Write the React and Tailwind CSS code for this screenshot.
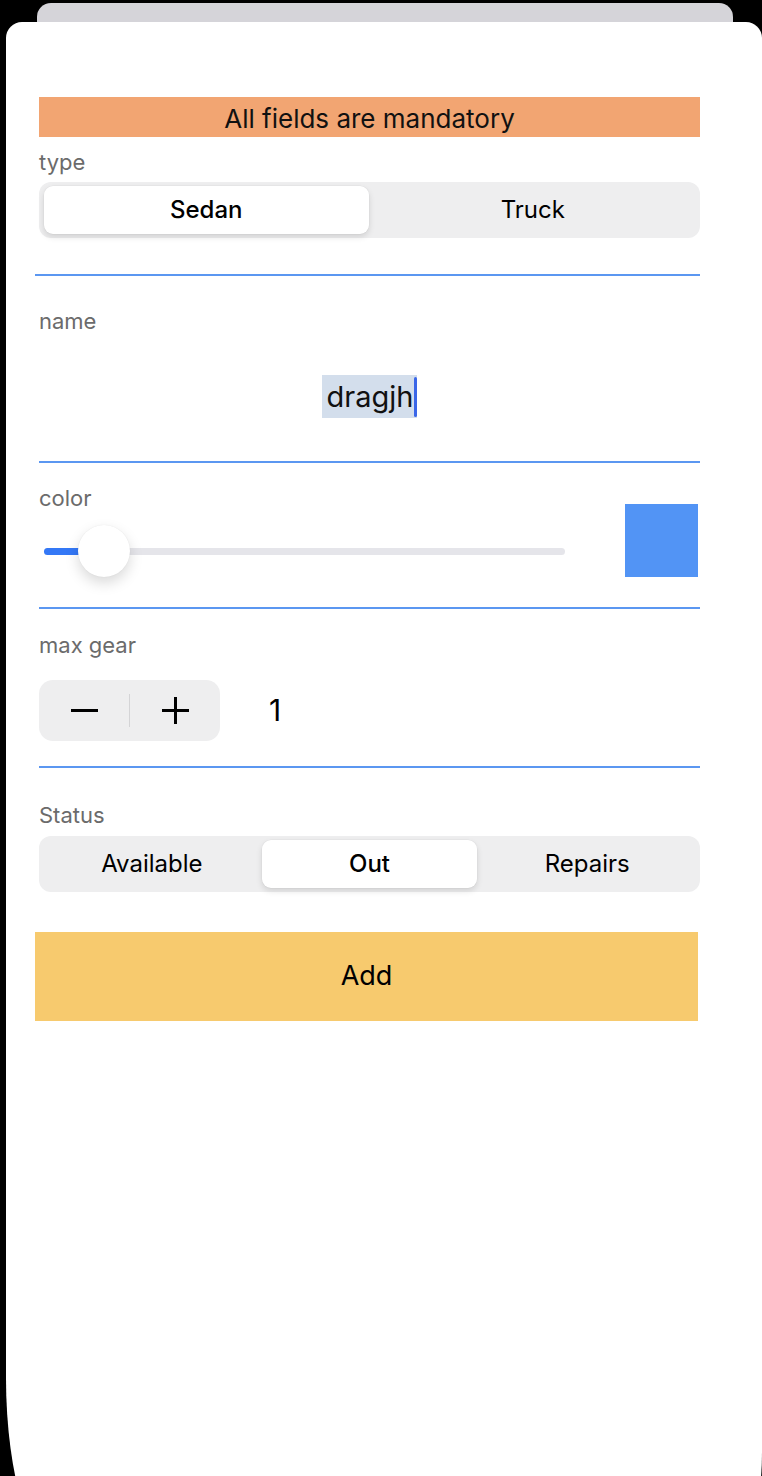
import React, { useState } from "react";

const labelCls = "text-[22px] leading-[24px] text-[#6b6b6b]";

function Segmented({ options, value, onChange }) {
  return (
    <div
      className="grid rounded-[12px] bg-[#eeeeef] p-[4px]"
      style={{ gridTemplateColumns: `repeat(${options.length}, minmax(0, 1fr))` }}
    >
      {options.map((opt) => {
        const active = opt === value;
        return (
          <button
            key={opt}
            onClick={() => onChange(opt)}
            className={
              active
                ? "h-[48px] mx-[1px] rounded-[9px] bg-white shadow-[0_3px_6px_rgba(0,0,0,0.12),0_0_0_0.5px_rgba(0,0,0,0.04)] text-[24px] font-medium text-black"
                : "h-[48px] text-[24px] text-black"
            }
          >
            {opt}
          </button>
        );
      })}
    </div>
  );
}

function Divider({ shift }) {
  return <div className={shift ? "h-[2px] bg-[#5b97f1] -ml-[4px]" : "h-[2px] bg-[#5b97f1]"} />;
}

export default function App() {
  const [type, setType] = useState("Sedan");
  const [status, setStatus] = useState("Out");
  const [gear, setGear] = useState(1);

  return (
    <div className="relative h-[1476px] overflow-hidden bg-black font-['Inter',sans-serif]">
      {/* card behind the sheet */}
      <div className="absolute left-[37px] top-[3px] h-[40px] w-[696px] rounded-t-[14px] bg-[#d5d4d9]" />

      <div className="relative ml-[6px] mt-[22px] h-[1540px] w-[756px] rounded-t-[16px] rounded-bl-[60px_184px] rounded-br-[36px_110px] bg-white pl-[33px] pt-[75px]">
        <div className="w-[661px]">
          <div className="flex h-[40px] items-center justify-center bg-[#f2a572] pt-[3px] text-[26px] text-[#111]">
            All fields are mandatory
          </div>

          <div className={`mt-[13px] ${labelCls}`}>type</div>
          <div className="mt-[8px]">
            <Segmented options={["Sedan", "Truck"]} value={type} onChange={setType} />
          </div>

          <div className="mt-[36px]">
            <Divider shift />
          </div>

          <div className={`mt-[33px] ${labelCls}`}>name</div>
          <div className="mt-[42px] flex h-[43px] justify-center">
            <div className="flex items-center bg-[#d3deec] pl-[5px] text-[29px] text-[#111]">
              dragjh
              <span className="ml-[1px] h-[40px] w-[3px] rounded-full bg-[#3a66e8]" />
            </div>
          </div>

          <div className="mt-[43px]">
            <Divider />
          </div>

          <div className="mt-[23px] flex items-end">
            <div className="flex-1">
              <div className={labelCls}>color</div>
              <div className="relative ml-[5px] mr-[60px] mt-[15px] flex h-[52px] items-center">
                <div className="h-[7px] w-full rounded-full bg-[#e5e5ea]" />
                <div className="absolute left-0 h-[7px] w-[50px] rounded-full bg-[#3478f6]" />
                <div className="absolute left-[34px] h-[52px] w-[52px] rounded-full bg-white shadow-[0_6px_14px_rgba(0,0,0,0.15),0_0_1px_rgba(0,0,0,0.1)]" />
              </div>
            </div>
            <div className="mr-[2px] h-[73px] w-[73px] bg-[#5294f5]" />
          </div>

          <div className="mt-[30px]">
            <Divider />
          </div>

          <div className={`mt-[24px] ${labelCls}`}>max gear</div>
          <div className="mt-[23px] flex items-center">
            <div className="flex h-[61px] w-[181px] items-center rounded-[14px] bg-[#eeeeef]">
              <button onClick={() => setGear(Math.max(0, gear - 1))} className="flex h-full flex-1 items-center justify-center">
                <span className="h-[3px] w-[27px] bg-black" />
              </button>
              <span className="h-[33px] w-[1px] bg-[#d4d4d6]" />
              <button onClick={() => setGear(gear + 1)} className="relative flex h-full flex-1 items-center justify-center">
                <span className="absolute h-[3px] w-[27px] bg-black" />
                <span className="absolute h-[27px] w-[3px] bg-black" />
              </button>
            </div>
            <span className="ml-[49px] text-[30px] text-black">{gear}</span>
          </div>

          <div className="mt-[25px]">
            <Divider />
          </div>

          <div className={`mt-[35px] ${labelCls}`}>Status</div>
          <div className="mt-[9px]">
            <Segmented options={["Available", "Out", "Repairs"]} value={status} onChange={setStatus} />
          </div>

          <button className="-ml-[4px] mt-[40px] flex h-[89px] w-[663px] items-center justify-center bg-[#f7ca6e] text-[27px] text-black">
            Add
          </button>
        </div>
      </div>
    </div>
  );
}
